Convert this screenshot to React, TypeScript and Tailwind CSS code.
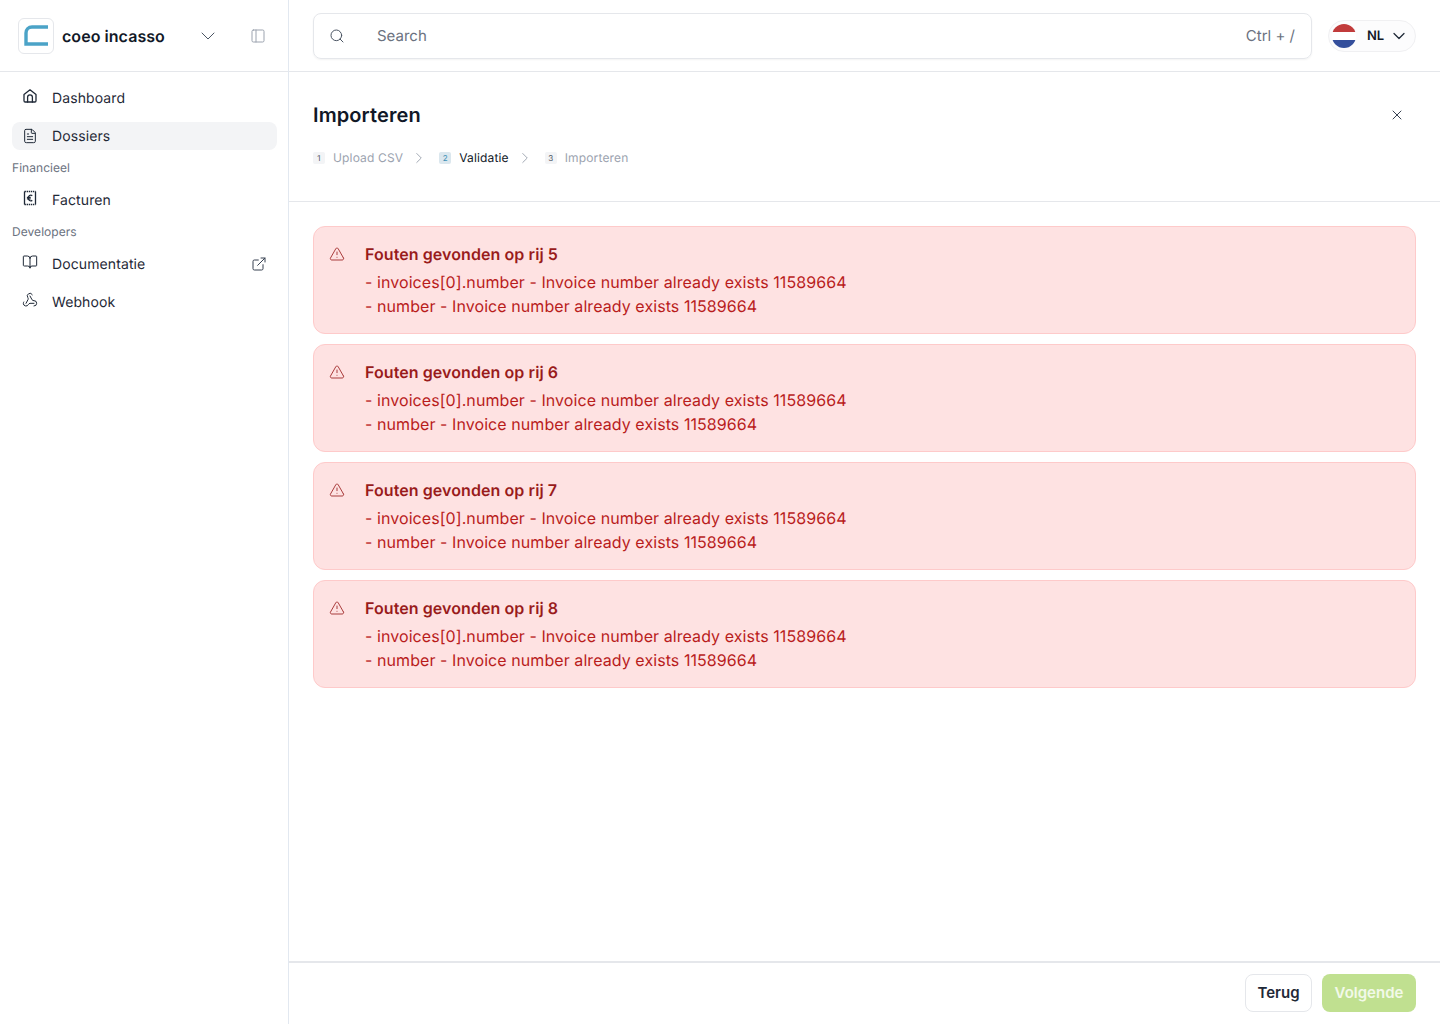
import { ChevronDown, ChevronRight, BookOpen, ExternalLink, FileText, PanelLeft, Search, TriangleAlert, Webhook, X } from 'lucide-react';

const errorRows = [5, 6, 7, 8];

function NavItem({ icon, label, active, trailing }: { icon: React.ReactNode; label: string; active?: boolean; trailing?: React.ReactNode }) {
  return (
    <div className={`h-7 flex items-center rounded-lg pl-[10px] pr-[10px] ${active ? 'bg-[#f3f4f6]' : ''}`}>
      <span className="w-4 h-4 flex items-center justify-center text-[#1f2937] -mt-1">{icon}</span>
      <span className="ml-[14px] pt-px text-sm tracking-[0.1px] text-[#1f2937]">{label}</span>
      {trailing && <span className="ml-auto">{trailing}</span>}
    </div>
  );
}

function Step({ n, label, current }: { n: number; label: string; current?: boolean }) {
  return (
    <div className="flex items-center">
      <span className={`w-3 h-3 rounded-[2px] flex items-center justify-center text-[8px] leading-none ${current ? 'bg-[#dbe7ee] text-[#3b8fb5]' : 'bg-[#f3f4f6] text-[#4b5563]'}`}>{n}</span>
      <span className={`ml-2 text-xs tracking-[0.15px] ${current ? 'text-[#111827]' : 'text-[#9ca3af]'}`}>{label}</span>
    </div>
  );
}

export default function App() {
  return (
    <div className="h-[1024px] flex bg-white overflow-hidden font-['Inter',sans-serif] antialiased [text-rendering:geometricPrecision]">
      {/* Sidebar */}
      <aside className="w-[289px] shrink-0 border-r border-[#e2e8f0] flex flex-col">
        <div className="h-[72px] shrink-0 border-b border-[#e5e7eb] flex items-center pl-[18px] pr-[22px]">
          <div className="w-9 h-9 rounded-md border border-[#e5e7eb] flex items-center justify-center">
            <svg width="26" height="22" viewBox="0 0 26 22" fill="none">
              <path d="M25 2H9C5.500 2 3 4.500 3 8V19H25" stroke="#4ba3c7" strokeWidth="3.400" />
            </svg>
          </div>
          <span className="ml-2 text-base tracking-[0.05px] font-semibold text-[#111827]">coeo incasso</span>
          <ChevronDown className="ml-auto w-6 h-6 text-[#4b5563]" strokeWidth={1} />
          <PanelLeft className="ml-[30px] w-4 h-4 text-[#9ca3af]" strokeWidth={1.5} />
        </div>
        <nav className="pl-3 pr-[11px] pt-3 flex flex-col gap-2.5">
          <NavItem
            icon={
              <svg width="16" height="16" viewBox="0 0 16 16" fill="none" stroke="currentColor" strokeWidth="1.3" strokeLinejoin="round" strokeLinecap="round">
                <path d="M2 6.600 8 1.800l6 4.800v6.200a1.200 1.200 0 0 1-1.200 1.200H3.200A1.200 1.200 0 0 1 2 12.800z" />
                <path d="M5.600 14V9.200a2.400 2.400 0 0 1 4.800 0V14" />
              </svg>
            }
            label="Dashboard"
          />
          <NavItem icon={<FileText className="w-4 h-4 translate-y-0.5" strokeWidth={1.5} />} label="Dossiers" active />
          <div className="h-4 flex items-center text-xs tracking-[0.05px] text-[#6b7280]">Financieel</div>
          <NavItem
            icon={
              <svg width="16" height="16" viewBox="0 0 16 16" fill="none" stroke="currentColor" strokeWidth="1.3">
                <path d="M2.500 1.500v13M13.500 1.500v13" />
                <path d="M2.500 1.500h11M2.500 14.500h11" strokeDasharray="1.400 0.700" />
                <path d="M10.300 5.600C8.200 4.500 6.300 5.700 6.300 8s1.900 3.500 4 2.400M4.900 7.300h3.800M4.900 8.800h3.800" strokeWidth="1.300" />
              </svg>
            }
            label="Facturen"
          />
          <div className="h-4 flex items-center text-xs tracking-[0.05px] text-[#6b7280]">Developers</div>
          <NavItem
            icon={<BookOpen className="w-4 h-4" strokeWidth={1.5} />}
            label="Documentatie"
            trailing={<ExternalLink className="w-4 h-4 text-[#374151]" strokeWidth={1.5} />}
          />
          <NavItem icon={<Webhook className="w-4 h-4" strokeWidth={1.5} />} label="Webhook" />
        </nav>
      </aside>

      {/* Main */}
      <main className="flex-1 min-w-0 flex flex-col">
        <header className="h-[72px] shrink-0 border-b border-[#e5e7eb] flex items-center pl-6 pr-6 gap-4">
          <div className="flex-1 h-[46px] rounded-lg border border-[#e5e7eb] shadow-[0_1px_2px_rgba(0,0,0,0.05)] flex items-center pl-[15px] pr-4">
            <Search className="w-4 h-4 text-[#4b5563]" strokeWidth={1.5} />
            <span className="ml-8 pt-px text-[15px] text-[#6b7280]">Search</span>
            <span className="ml-auto pt-px text-[15px] text-[#6b7280]">Ctrl + /</span>
          </div>
          <div className="w-[88px] h-8 rounded-full border border-[#f0f0f2] bg-[#fcfcfd] flex items-center pl-[3px]">
            <div className="w-6 h-6 rounded-full overflow-hidden flex flex-col">
              <div className="flex-1 bg-[#c13b3b]" />
              <div className="flex-1 bg-white" />
              <div className="flex-1 bg-[#344f9c]" />
            </div>
            <span className="ml-[11px] pt-[2px] text-[13px] font-semibold text-[#111827]">NL</span>
            <ChevronDown className="ml-[5px] w-5 h-5 text-[#1f2937]" strokeWidth={1.5} />
          </div>
        </header>

        <section className="h-[130px] shrink-0 border-b border-[#e5e7eb] px-6 pt-[29px]">
          <div className="flex items-center justify-between h-7">
            <h1 className="text-xl tracking-[0.1px] font-semibold text-[#111827]">Importeren</h1>
            <X className="w-4 h-4 mr-[11px] text-[#374151]" strokeWidth={1.5} />
          </div>
          <div className="mt-[21px] flex items-center h-4">
            <Step n={1} label="Upload CSV" />
            <ChevronRight className="w-[18px] h-[18px] ml-[7px] mr-[11px] text-[#9ca3af]" strokeWidth={1.25} />
            <Step n={2} label="Validatie" current />
            <ChevronRight className="w-[18px] h-[18px] ml-[7px] mr-[11px] text-[#9ca3af]" strokeWidth={1.25} />
            <Step n={3} label="Importeren" />
          </div>
        </section>

        <section className="flex-1 px-6 pt-6 flex flex-col gap-2.5">
          {errorRows.map((row) => (
            <div key={row} className="h-[108px] rounded-xl border border-[#fecaca] bg-[#fee2e2] flex pl-[15px] pt-[17px]">
              <TriangleAlert className="w-4 h-4 mt-[2px] text-[#991b1b]" strokeWidth={1.25} />
              <div className="ml-5">
                <p className="text-base leading-5 tracking-[0.08px] font-semibold text-[#991b1b]">Fouten gevonden op rij {row}</p>
                <p className="mt-[6px] text-base leading-6 tracking-[0.07px] text-[#b91c1c]">- invoices[0].number - Invoice number already exists 11589664</p>
                <p className="text-base leading-6 tracking-[0.07px] text-[#b91c1c]">- number - Invoice number already exists 11589664</p>
              </div>
            </div>
          ))}
        </section>

        <footer className="h-[63px] shrink-0 border-t-2 border-[#e5e7eb] flex items-start justify-end gap-2.5 pr-6 pt-[11px]">
          <button className="w-[67px] h-[38px] pt-px rounded-lg border border-[#e5e7eb] bg-white text-[15px] font-semibold text-[#1f2937]">Terug</button>
          <button className="w-[94px] h-[38px] pt-px rounded-lg bg-[#c0e090] text-[15px] font-semibold text-white/80">Volgende</button>
        </footer>
      </main>
    </div>
  );
}
